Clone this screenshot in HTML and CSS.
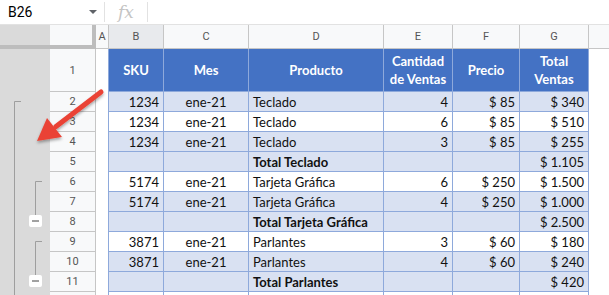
FILE: index.html
```html
<!DOCTYPE html>
<html lang="es">
<head>
    <meta charset="UTF-8">
    <title>Agrupar filas</title>
    <link rel="stylesheet" href="styles.css">
</head>
<body>

    <div class="formula-bar">
        <div class="name-box">
            <span>B26</span>
            <svg class="caret" width="8" height="4" viewBox="0 0 8 4"><path d="M0 0 L8 0 L4 4 Z" fill="#5f6368"/></svg>
        </div>
        <div class="fx">fx</div>
        <div class="formula-input"></div>
    </div>

    <div class="sheet">
        <div class="gutter">
            <div class="gutter-top"></div>
            <svg class="groups" width="50" height="246" viewBox="0 0 50 246">
                <g stroke="#9e9e9e" stroke-width="1" fill="none">
                    <path d="M21 52.5 H14.5 V246"/>
                    <path d="M42 132.5 H35.5 V166"/>
                    <path d="M42 192.5 H35.5 V226"/>
                </g>
                <rect x="29" y="166" width="13" height="12" rx="2" fill="#fff"/>
                <rect x="32" y="171.5" width="7" height="1" fill="#444"/>
                <rect x="29" y="226" width="13" height="12" rx="2" fill="#fff"/>
                <rect x="32" y="231.5" width="7" height="1" fill="#444"/>
            </svg>
        </div>

        <div class="grid">
            <div class="row colheads">
                <div class="corner"></div>
                <div class="ch">A</div>
                <div class="ch sel">B</div>
                <div class="ch">C</div>
                <div class="ch">D</div>
                <div class="ch">E</div>
                <div class="ch">F</div>
                <div class="ch">G</div>
                <div class="ch last"></div>
            </div>

            <div class="row head">
                <div class="n">1</div><div class="a"></div>
                <div class="c m">SKU</div>
                <div class="c m">Mes</div>
                <div class="c m">Producto</div>
                <div class="c m">Cantidad de Ventas</div>
                <div class="c m">Precio</div>
                <div class="c m">Total Ventas</div>
                <div class="h"></div>
            </div>

            <div class="row band">
                <div class="n">2</div><div class="a"></div>
                <div class="c r">1234</div><div class="c m">ene-21</div><div class="c">Teclado</div>
                <div class="c r">4</div><div class="c r">$ 85</div><div class="c r">$ 340</div>
                <div class="h"></div>
            </div>
            <div class="row">
                <div class="n">3</div><div class="a"></div>
                <div class="c r">1234</div><div class="c m">ene-21</div><div class="c">Teclado</div>
                <div class="c r">6</div><div class="c r">$ 85</div><div class="c r">$ 510</div>
                <div class="h"></div>
            </div>
            <div class="row band">
                <div class="n">4</div><div class="a"></div>
                <div class="c r">1234</div><div class="c m">ene-21</div><div class="c">Teclado</div>
                <div class="c r">3</div><div class="c r">$ 85</div><div class="c r">$ 255</div>
                <div class="h"></div>
            </div>
            <div class="row band">
                <div class="n">5</div><div class="a"></div>
                <div class="c"></div><div class="c"></div><div class="c b">Total Teclado</div>
                <div class="c"></div><div class="c"></div><div class="c r">$ 1.105</div>
                <div class="h"></div>
            </div>
            <div class="row">
                <div class="n">6</div><div class="a"></div>
                <div class="c r">5174</div><div class="c m">ene-21</div><div class="c">Tarjeta Gráfica</div>
                <div class="c r">6</div><div class="c r">$ 250</div><div class="c r">$ 1.500</div>
                <div class="h"></div>
            </div>
            <div class="row band">
                <div class="n">7</div><div class="a"></div>
                <div class="c r">5174</div><div class="c m">ene-21</div><div class="c">Tarjeta Gráfica</div>
                <div class="c r">4</div><div class="c r">$ 250</div><div class="c r">$ 1.000</div>
                <div class="h"></div>
            </div>
            <div class="row band">
                <div class="n">8</div><div class="a"></div>
                <div class="c"></div><div class="c"></div><div class="c b">Total Tarjeta Gráfica</div>
                <div class="c"></div><div class="c"></div><div class="c r">$ 2.500</div>
                <div class="h"></div>
            </div>
            <div class="row">
                <div class="n">9</div><div class="a"></div>
                <div class="c r">3871</div><div class="c m">ene-21</div><div class="c">Parlantes</div>
                <div class="c r">3</div><div class="c r">$ 60</div><div class="c r">$ 180</div>
                <div class="h"></div>
            </div>
            <div class="row band">
                <div class="n">10</div><div class="a"></div>
                <div class="c r">3871</div><div class="c m">ene-21</div><div class="c">Parlantes</div>
                <div class="c r">4</div><div class="c r">$ 60</div><div class="c r">$ 240</div>
                <div class="h"></div>
            </div>
            <div class="row band">
                <div class="n">11</div><div class="a"></div>
                <div class="c"></div><div class="c"></div><div class="c b">Total Parlantes</div>
                <div class="c"></div><div class="c"></div><div class="c r">$ 420</div>
                <div class="h"></div>
            </div>
            <div class="row">
                <div class="n"></div><div class="a"></div>
                <div class="c"></div><div class="c"></div><div class="c"></div>
                <div class="c"></div><div class="c"></div><div class="c"></div>
                <div class="h"></div>
            </div>
        </div>
    </div>

    <!-- red callout arrow pointing at the outline gutter -->
    <svg class="arrow" width="609" height="295" viewBox="0 0 609 295">
        <defs>
            <filter id="shadow" x="-20%" y="-20%" width="140%" height="140%">
                <feDropShadow dx="0" dy="2" stdDeviation="1.5" flood-color="#000" flood-opacity="0.35"/>
            </filter>
        </defs>
        <g filter="url(#shadow)" fill="#ea4335">
            <line x1="101" y1="92" x2="56" y2="126.5" stroke="#ea4335" stroke-width="5" stroke-linecap="round"/>
            <polygon points="37,141 47,118 62,137"/>
        </g>
    </svg>

</body>
</html>
```

FILE: styles.css
```css
* {
    box-sizing: border-box;
    margin: 0;
    padding: 0;
}

body {
    width: 609px;
    height: 295px;
    overflow: hidden;
    position: relative;
    background: #fff;
    font-family: 'Lato', sans-serif;
}

.formula-bar {
    display: flex;
    height: 25px;
    border-bottom: 1px solid #e2e2e2;
}

.name-box {
    width: 105px;
    display: flex;
    align-items: center;
    justify-content: space-between;
    padding: 0 7px 0 8px;
    border-right: 1px solid #e2e2e2;
    margin: 2px 0;
    font-family: Roboto, 'Liberation Sans', sans-serif;
    font-size: 14px;
    color: #000;
}

.fx {
    width: 43px;
    display: flex;
    align-items: center;
    justify-content: center;
    border-right: 1px solid #e2e2e2;
    margin: 2px 0;
    font-family: 'DejaVu Serif', serif;
    font-style: italic;
    font-size: 17px;
    color: #c4c4c4;
}

.formula-input {
    flex: 1;
}

.sheet {
    display: flex;
    height: 270px;
}

.gutter {
    width: 50px;
    background: #dadada;
}

.gutter-top {
    height: 24px;
    border-bottom: 4px solid #bdbdbd;
}

.groups {
    display: block;
}

.grid {
    flex: 1;
    display: grid;
    grid-template-columns: 46px 13px 55px 85px 135px 69px 67px 69px 1fr;
    grid-template-rows: 24px 43px;
    grid-auto-rows: 20px;
}

.row {
    display: contents;
}

/* column letters */
.ch {
    display: flex;
    align-items: center;
    justify-content: center;
    background: #f8f9fa;
    border-right: 1px solid #c6c6c6;
    border-bottom: 1px solid #c6c6c6;
    font-family: Roboto, 'Liberation Sans', sans-serif;
    font-size: 11px;
    color: #555;
}

.ch.sel {
    background: #e8eaed;
}

.ch.last {
    border-right: none;
}

.corner {
    background: #f8f9fa;
    border-right: 4px solid #bdbdbd;
    border-bottom: 4px solid #bdbdbd;
}

/* row numbers */
.n {
    display: flex;
    align-items: center;
    justify-content: center;
    background: #f8f9fa;
    border-right: 1px solid #c6c6c6;
    border-bottom: 1px solid #c6c6c6;
    font-family: Roboto, 'Liberation Sans', sans-serif;
    font-size: 11px;
    color: #555;
}

.a {
    background: #fff;
    border-right: 1px solid #8ea9db;
}

.h {
    background: #fff;
}

.c {
    display: flex;
    align-items: center;
    padding: 0 4px;
    background: #fff;
    border-right: 1px solid #8ea9db;
    border-bottom: 1px solid #8ea9db;
    font-size: 13px;
    color: #111;
    white-space: nowrap;
}

.c.r {
    justify-content: flex-end;
}

.c.m {
    justify-content: center;
    text-align: center;
}

.c.b {
    font-weight: bold;
}

.band .c {
    background: #d9e1f2;
}

.head .c {
    background: #4472c4;
    color: #fff;
    font-weight: bold;
    white-space: normal;
    line-height: 18px;
    padding: 0 2px;
}

.arrow {
    position: absolute;
    top: 0;
    left: 0;
    pointer-events: none;
}
```
